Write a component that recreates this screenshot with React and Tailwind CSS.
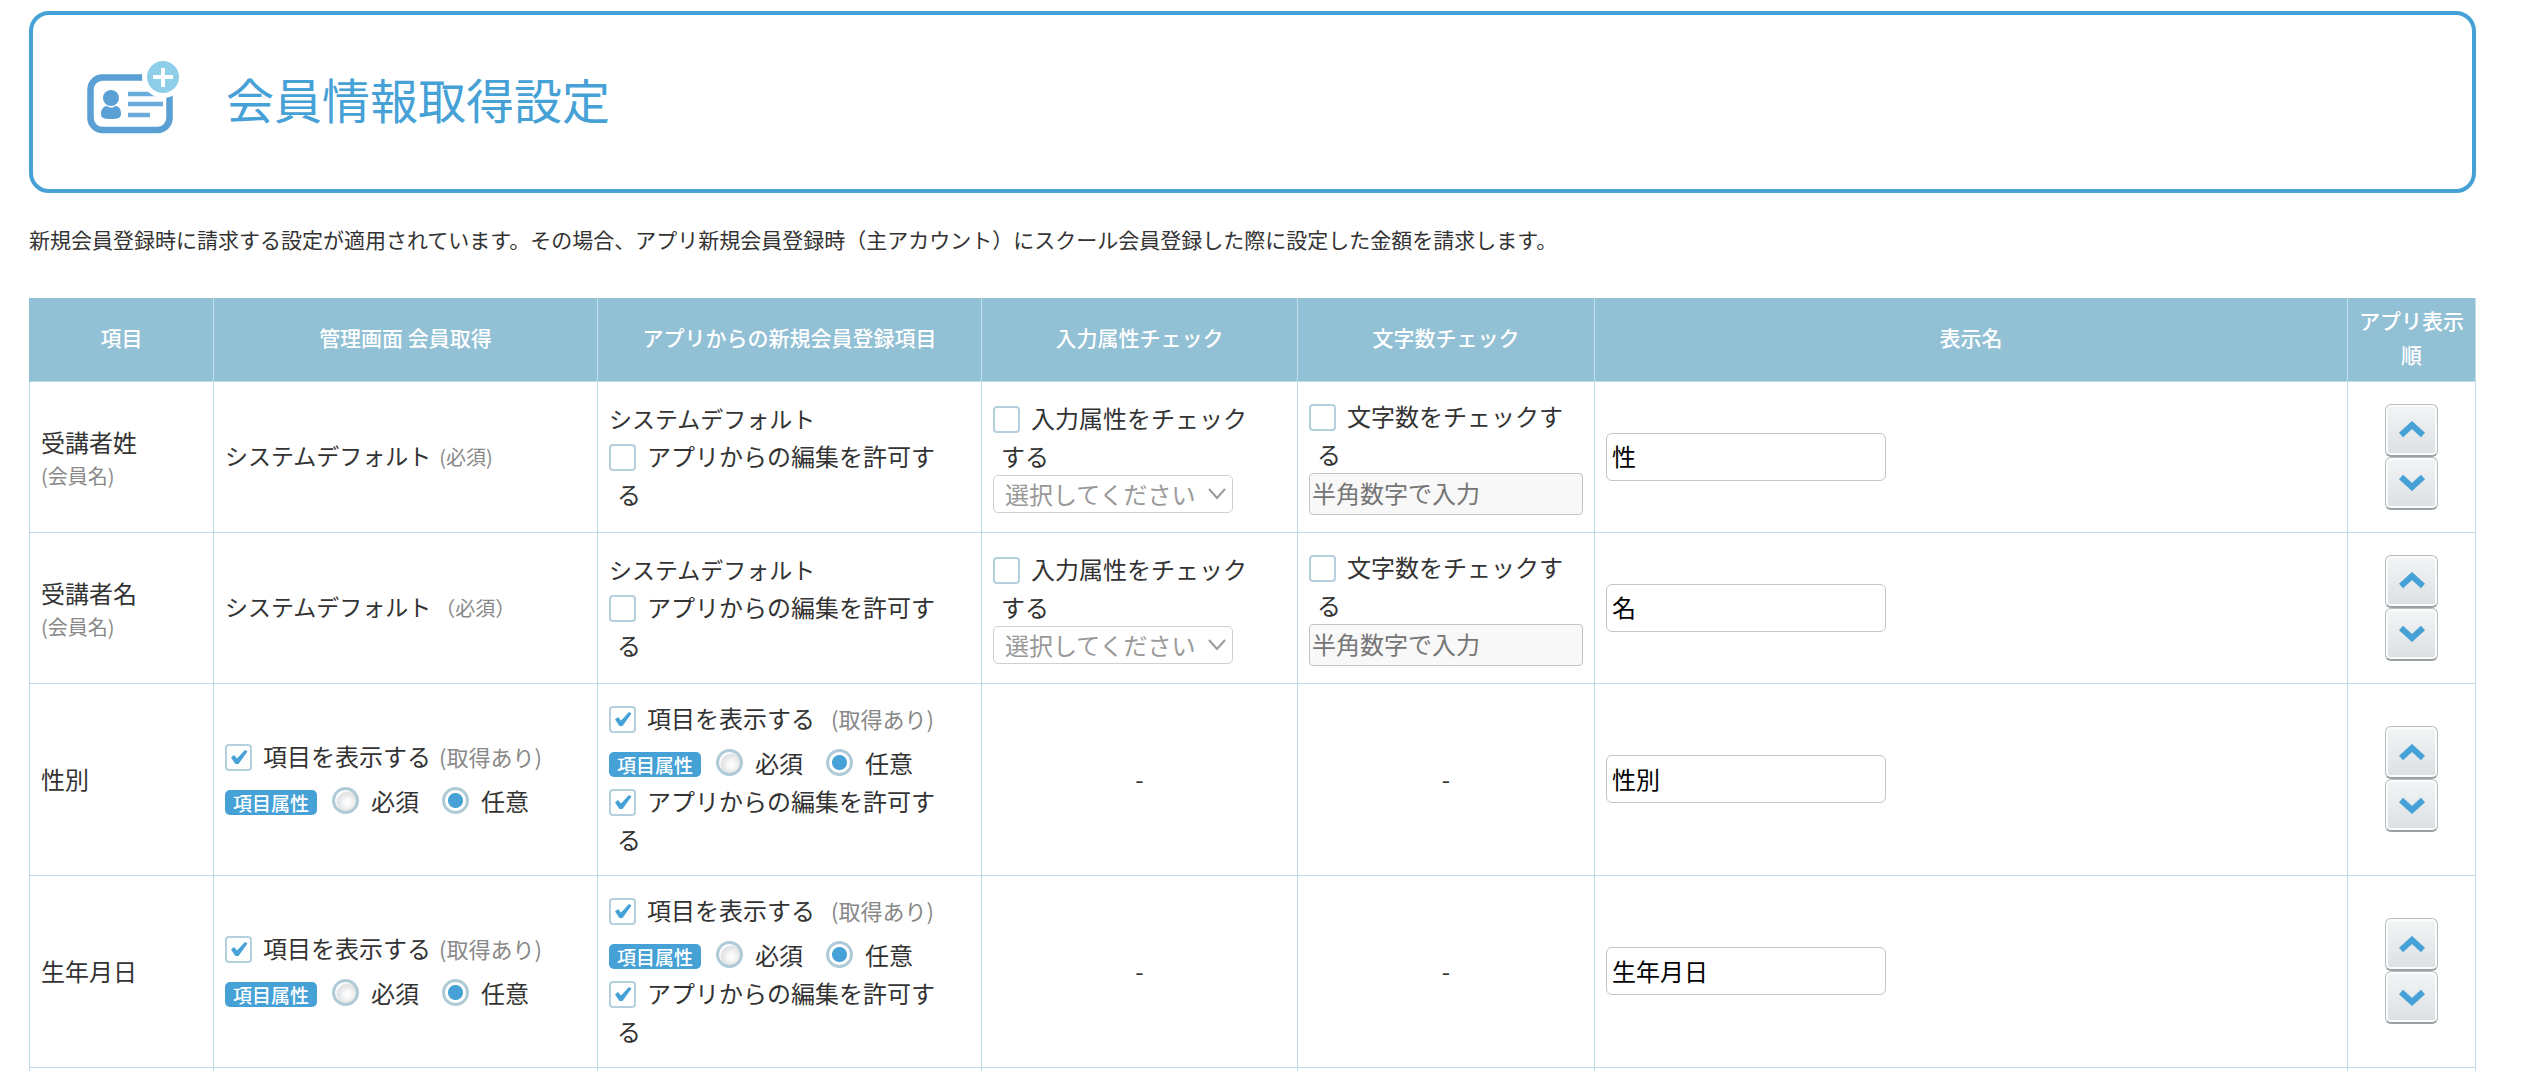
import React, { useState } from 'react';

const HEADERS = [
  { label: '項目', width: 'w-[184px]' },
  { label: '管理画面 会員取得', width: 'w-[384px]' },
  { label: 'アプリからの新規会員登録項目', width: 'w-[384px]' },
  { label: '入力属性チェック', width: 'w-[316px]' },
  { label: '文字数チェック', width: 'w-[297px]' },
  { label: '表示名', width: '' },
  { label: 'アプリ表示順', width: 'w-[128px]' },
];

const ROWS = [
  { id: 'last', title: '受講者姓', sub: '(会員名)', note: '(必須)', system: true, name: '性' },
  { id: 'first', title: '受講者名', sub: '(会員名)', note: '（必須）', wideNote: true, system: true, name: '名' },
  { id: 'gender', title: '性別', name: '性別' },
  { id: 'birthday', title: '生年月日', name: '生年月日' },
];

const MemberCardIcon = () => (
  <svg width="96" height="80" viewBox="0 0 96 80" fill="none" aria-hidden="true">
    <rect x="4.5" y="19.5" width="79" height="52.5" rx="12" stroke="#5aa0d4" strokeWidth="6.5" />
    <circle cx="25" cy="40" r="8" fill="#5aa0d4" />
    <path d="M15 56c0-5 3-8 6-8 3 2 6 2 8 0 4 0 6 3 6 8 0 4-3 5-10 5s-10-1-10-5z" fill="#5aa0d4" />
    <path d="M42 36h30M42 46h35M42 57h22" stroke="#6aabdb" strokeWidth="4.5" />
    <circle cx="77" cy="19" r="21" fill="#fff" />
    <circle cx="77" cy="19" r="16" fill="#8fcee8" />
    <path d="M67 19h20M77 10v19" stroke="#fff" strokeWidth="4" />
  </svg>
);

const CheckItem = ({ id, label, defaultChecked = false, children }) => {
  const [checked, setChecked] = useState(defaultChecked);
  return (
    <div className="pl-2 pr-4">
      <span className="relative -ml-2 mr-[11px] inline-block size-[27px] align-[-5px]">
        <input
          id={id}
          type="checkbox"
          checked={checked}
          onChange={() => setChecked(!checked)}
          className="block size-[27px] appearance-none rounded-[4px] border-2 border-[#b5cfdd] bg-white"
        />
        {checked && (
          <svg viewBox="0 0 27 27" className="pointer-events-none absolute inset-0 size-[27px]" aria-hidden="true">
            <path d="M6 13.5l3-2.5 3 3.5L20 6l2.5 1.5L13.5 20h-3z" fill="#46a1d6" />
          </svg>
        )}
      </span>
      <label htmlFor={id}>{label}</label>
      {children}
    </div>
  );
};

const Radio = ({ id, name, label, defaultChecked }) => (
  <span className="flex items-center gap-3">
    <input
      id={id}
      type="radio"
      name={name}
      defaultChecked={defaultChecked}
      className="size-[27px] appearance-none rounded-full border-3 border-[#b0cbd8] bg-[radial-gradient(circle_at_60%_60%,#fdfdfd_2px,#e0e2e3_10px,#ffffff_12px)] checked:bg-[radial-gradient(circle,#46a1d6_7px,#ffffff_8px)]"
    />
    <label htmlFor={id}>{label}</label>
  </span>
);

const AttributeRadios = ({ name }) => (
  <div className="mt-[7px] flex h-[38px] items-center">
    <span className="mt-1 mr-[15px] rounded-[5px] bg-[#46a1d6] px-2 text-[19px] leading-[25px] font-medium text-white">項目属性</span>
    <div className="flex gap-[23px]">
      <Radio id={`${name}-required`} name={name} label="必須" />
      <Radio id={`${name}-optional`} name={name} label="任意" defaultChecked />
    </div>
  </div>
);

const AdminCell = ({ row }) =>
  row.system ? (
    <p className="text-[23px]">
      システムデフォルト
      <span className={row.wideNote ? 'ml-1 text-[20px] text-[#888]' : 'ml-2 text-[20px] text-[#888]'}>{row.note}</span>
    </p>
  ) : (
    <>
      <CheckItem id={`${row.id}-admin-show`} label="項目を表示する" defaultChecked>
        <span className="ml-2 text-[22px] text-[#888]">(取得あり)</span>
      </CheckItem>
      <AttributeRadios name={`${row.id}-admin`} />
    </>
  );

const AppCell = ({ row }) => (
  <>
    {row.system ? (
      <p className="text-[23px]">システムデフォルト</p>
    ) : (
      <>
        <CheckItem id={`${row.id}-app-show`} label="項目を表示する" defaultChecked>
          <span className="ml-4 text-[22px] text-[#888]">(取得あり)</span>
        </CheckItem>
        <AttributeRadios name={`${row.id}-app`} />
      </>
    )}
    <CheckItem id={`${row.id}-app-edit`} label="アプリからの編集を許可する" defaultChecked={!row.system} />
  </>
);

const TypeCheck = ({ id }) => (
  <>
    <CheckItem id={`${id}-type`} label="入力属性をチェックする" />
    <div className="relative w-[240px]">
      <select
        disabled
        aria-label="入力属性"
        className="block h-[38px] w-full appearance-none rounded-[5px] border border-[#d0d0d0] bg-white pl-[11px] text-[24px] leading-[34px] text-[#999] opacity-100"
      >
        <option>選択してください</option>
      </select>
      <svg viewBox="0 0 18 12" className="pointer-events-none absolute top-[13px] right-[7px] h-3 w-[18px]" aria-hidden="true">
        <path d="M1 1l8 9 8-9" fill="none" stroke="#999" strokeWidth="2" />
      </svg>
    </div>
  </>
);

const LengthCheck = ({ id }) => (
  <>
    <CheckItem id={`${id}-length`} label="文字数をチェックする" />
    <input
      type="text"
      disabled
      aria-label="文字数"
      placeholder="半角数字で入力"
      className="block h-[42px] w-full rounded-[4px] border border-[#c4c4c4] bg-[#f8f8f8] px-[2px] pb-[2px] placeholder:text-[#757575]"
    />
  </>
);

const MoveButton = ({ label, d }) => (
  <button
    type="button"
    aria-label={label}
    className="flex size-[53px] items-center justify-center rounded-[6px] border border-[#b9bfc1] border-b-2 border-b-[#9aa2a4] bg-linear-to-b from-[#f3f5f6] to-[#dce0e3] shadow-[inset_0_0_0_2px_#fafbfb]"
  >
    <svg viewBox="0 0 26 17" className="h-[17px] w-[26px]" aria-hidden="true">
      <path d={d} fill="none" stroke="#46a1d6" strokeWidth="6" />
    </svg>
  </button>
);

const SettingRow = ({ row }) => (
  <tr className={row.system ? 'h-[151px]' : 'h-[192px]'}>
    <td className="border border-[#bcdae7] px-[11px]">
      <p>{row.title}</p>
      {row.sub && <p className="text-[20px] leading-[30px] text-[#888]">{row.sub}</p>}
    </td>
    <td className="border border-[#bcdae7] px-[11px] pb-[2px]"><AdminCell row={row} /></td>
    <td className="border border-[#bcdae7] px-[11px] pb-[2px]"><AppCell row={row} /></td>
    <td className={row.system ? 'border border-[#bcdae7] px-[11px] pb-[2px]' : 'border border-[#bcdae7] text-center'}>
      {row.system ? <TypeCheck id={row.id} /> : '-'}
    </td>
    <td className={row.system ? 'border border-[#bcdae7] px-[11px] pb-[2px]' : 'border border-[#bcdae7] text-center'}>
      {row.system ? <LengthCheck id={row.id} /> : '-'}
    </td>
    <td className="border border-[#bcdae7] px-[11px]">
      <input
        type="text"
        aria-label={`${row.title} 表示名`}
        defaultValue={row.name}
        className="block h-12 w-[280px] rounded-[6px] border border-[#c4c4c4] bg-white px-[5px] pb-[2px] text-black"
      />
    </td>
    <td className="border border-[#bcdae7]">
      <div className="flex flex-col items-center">
        <MoveButton label="上へ" d="M2 14L13 4l11 10" />
        <MoveButton label="下へ" d="M2 3l11 10L24 3" />
      </div>
    </td>
  </tr>
);

export default function App() {
  return (
    <main className="bg-white pt-[11px] pr-12 pl-[29px] font-['Noto_Sans_CJK_JP',sans-serif] text-[24px] leading-[38px] text-[#333]">
      <header className="flex h-[182px] items-center gap-11 rounded-[20px] border-4 border-[#46a1d6] pb-2 pl-[53px]">
        <MemberCardIcon />
        <h1 className="text-[48px] leading-[72px] text-[#46a1d6]">会員情報取得設定</h1>
      </header>
      <p className="mt-[29px] text-[21px] leading-[34px]">
        新規会員登録時に請求する設定が適用されています。その場合、アプリ新規会員登録時（主アカウント）にスクール会員登録した際に設定した金額を請求します。
      </p>
      <table className="mt-[42px] w-full table-fixed border-collapse">
        <thead>
          <tr className="h-[83px] bg-[#92c0d5]">
            {HEADERS.map(h => (
              <th key={h.label} className={`${h.width} border-x border-[#c3dde9] px-2 pb-1 text-[21px] leading-[34px] font-medium text-white first:border-l-[#92c0d5]`}>
                {h.label}
              </th>
            ))}
          </tr>
        </thead>
        <tbody>
          {ROWS.map(row => <SettingRow key={row.id} row={row} />)}
          <tr className="h-1">
            {HEADERS.map(h => <td key={h.label} className="border-x border-[#bcdae7]" />)}
          </tr>
        </tbody>
      </table>
    </main>
  );
}
